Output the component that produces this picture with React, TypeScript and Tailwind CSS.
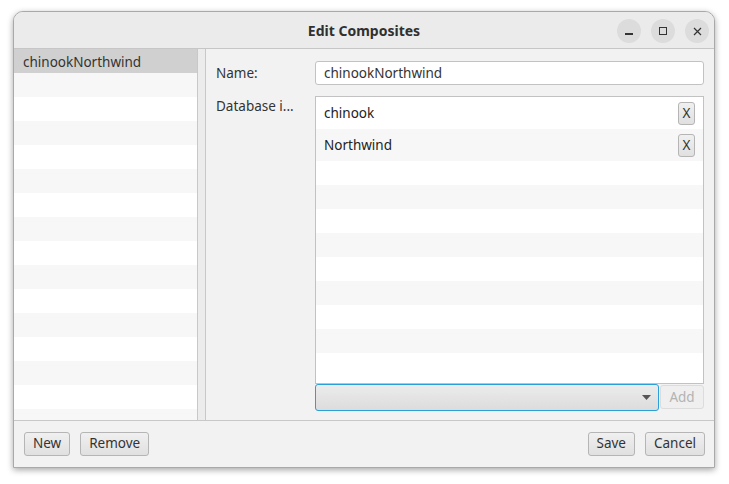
const font = { fontFamily: '"Noto Sans", "Open Sans", sans-serif' };

function FxButton({ label }: { label: string }) {
  return (
    <button className="h-6 px-[8px] rounded-[3px] border border-[#b5b5b5] text-[13.5px] leading-none text-[#333] bg-gradient-to-b from-[#f0f0f0] to-[#e0e0e0]">
      {label}
    </button>
  );
}

export default function App() {
  const leftRows = Array.from({ length: 15 });
  const emptyRows = Array.from({ length: 9 });

  return (
    <div className="w-[729px] h-[484px] bg-white pt-[11px] pl-[13px]" style={font}>
      <div className="w-[702px] h-[457px] flex flex-col rounded-t-[10px] border border-[#a9a9a9] bg-[#f2f2f2] shadow-[0_2px_6px_rgba(0,0,0,0.35)] overflow-hidden">
        {/* title bar */}
        <div className="h-[37px] shrink-0 flex items-center relative bg-[#ebebeb] border-b border-[#c6c6c6]">
          <div className="flex-1 text-center text-[14px] font-bold text-[#303030]">Edit Composites</div>
          <div className="absolute right-[5px] top-[7px] flex gap-[10px]">
            <div className="w-6 h-6 rounded-full bg-[#dcdcdc] flex items-center justify-center">
              <div className="w-[8px] h-[1.5px] bg-[#333] mt-[6px]" />
            </div>
            <div className="w-6 h-6 rounded-full bg-[#dcdcdc] flex items-center justify-center">
              <div className="w-[8px] h-[8px] border border-[#333]" />
            </div>
            <div className="w-6 h-6 rounded-full bg-[#dcdcdc] flex items-center justify-center">
              <svg width="9" height="9" viewBox="0 0 9 9">
                <path d="M1 1L8 8M8 1L1 8" stroke="#333" strokeWidth="1.2" />
              </svg>
            </div>
          </div>
        </div>

        {/* content */}
        <div className="h-[372px] shrink-0 flex border-b border-[#c8c8c8]">
          <div className="w-[184px] bg-white border-r border-[#c8c8c8] flex flex-col overflow-hidden">
            <div className="h-6 shrink-0 bg-[#d0d0d0] px-[9px] pt-[2px] flex items-center text-[13.5px] text-[#333]">
              chinookNorthwind
            </div>
            {leftRows.map((_, i) => (
              <div key={i} className={"h-6 shrink-0 " + (i % 2 === 0 ? "bg-[#f7f7f7]" : "bg-white")} />
            ))}
          </div>
          <div className="w-[8px] bg-[#ececec] border-r border-[#c8c8c8]" />

          <div className="flex-1 pl-[10px] pr-[10px] pt-[12px] grid grid-cols-[99px_1fr] grid-rows-[24px_1fr] gap-y-[11px]">
            <div className="flex items-center text-[13.5px] text-[#333]">Name:</div>
            <div className="h-6 border border-[#c2c2c2] rounded-[3px] bg-white flex items-center px-[8px] text-[13.5px] text-[#333]">
              chinookNorthwind
            </div>
            <div className="pt-[1px] text-[13.5px] text-[#333] leading-[18px]">Database i...</div>
            <div className="flex flex-col pb-[9px]">
              <div className="flex-1 border border-[#c2c2c2] bg-white flex flex-col overflow-hidden">
                {["chinook", "Northwind"].map((name, i) => (
                  <div
                    key={name}
                    className={"h-8 shrink-0 flex items-center justify-between pl-[8px] pr-[8px] " + (i === 1 ? "bg-[#f7f7f7]" : "bg-white")}
                  >
                    <span className="text-[13.5px] text-[#222]">{name}</span>
                    <div className="w-[17px] h-[23px] rounded-[3px] border border-[#b5b5b5] bg-gradient-to-b from-[#f0f0f0] to-[#e0e0e0] flex items-center justify-center text-[13.5px] text-[#333]">
                      X
                    </div>
                  </div>
                ))}
                {emptyRows.map((_, i) => (
                  <div key={i} className={"h-6 shrink-0 " + (i % 2 === 0 ? "bg-white" : "bg-[#f7f7f7]")} />
                ))}
              </div>
              <div className="flex h-[27px] shrink-0">
                <div className="flex-1 rounded-[3px] border border-[#2a9fd8] bg-gradient-to-b from-[#ececec] to-[#dcdcdc] flex items-center justify-end pr-[7px]">
                  <svg width="9" height="5" viewBox="0 0 9 5">
                    <path d="M0 0H9L4.5 5Z" fill="#555" />
                  </svg>
                </div>
                <div className="ml-[1px] mt-[1px] h-6 w-[44px] rounded-[3px] border border-[#dcdcdc] bg-[#efefef] flex items-center justify-center text-[13.5px] text-[#b3b3b3]">
                  Add
                </div>
              </div>
            </div>
          </div>
        </div>

        {/* button bar */}
        <div className="flex-1 flex items-center pl-[10px] pr-[9px] gap-[10px] bg-[#f2f2f2]">
          <FxButton label="New" />
          <FxButton label="Remove" />
          <div className="flex-1" />
          <FxButton label="Save" />
          <FxButton label="Cancel" />
        </div>
      </div>
    </div>
  );
}
